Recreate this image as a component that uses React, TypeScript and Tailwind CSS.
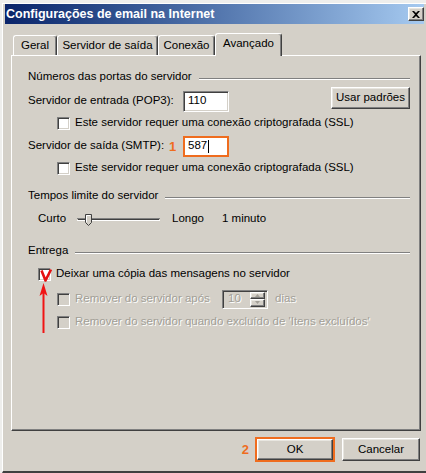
const raised =
  "bg-[#d4d0c8] border border-t-white border-l-white border-r-[#404040] border-b-[#404040] shadow-[inset_-1px_-1px_0_#808080,inset_1px_1px_0_#e8e6e0]";
const sunken =
  "border border-t-[#808080] border-l-[#808080] border-r-white border-b-white shadow-[inset_1px_1px_0_#404040,inset_-1px_-1px_0_#d4d0c8]";
const disabledText = "text-[#a29f97] [text-shadow:1px_1px_0_#ffffff]";

const Checkbox = ({ disabled = false, checked = false }: { disabled?: boolean; checked?: boolean }) => (
  <div
    className={`relative w-[13px] h-[13px] shrink-0 ${sunken} ${
      disabled ? "bg-[#d4d0c8]" : "bg-white"
    }`}
  >
    {checked && (
      <svg className="absolute left-[0px] top-[-1px]" width="14" height="14" viewBox="0 0 14 14">
        <path d="M2.5 2.5 L6.5 12.5 L12 1.5" fill="none" stroke="#e41010" strokeWidth="2.6" strokeLinejoin="round" />
      </svg>
    )}
  </div>
);

const GroupHeader = ({ label, className = "" }: { label: string; className?: string }) => (
  <div className={`h-[22px] flex items-center ${className}`}>
    <span>{label}</span>
    <div className="flex-1 ml-[7px] mt-[4px] border-t border-t-[#808080] border-b border-b-white" />
  </div>
);

const Slider = () => (
  <svg width="83" height="14" viewBox="0 0 83 14">
    <line x1="0" y1="6.5" x2="83" y2="6.5" stroke="#808080" />
    <line x1="1" y1="7.5" x2="82" y2="7.5" stroke="#404040" />
    <line x1="0" y1="8.5" x2="83" y2="8.5" stroke="#ffffff" />
    <path d="M8.5 2.5 H14.5 V10.5 L11.5 13.5 L8.5 10.5 Z" fill="#d4d0c8" stroke="#404040" />
    <path d="M9.5 10 V3.5 H13.5" fill="none" stroke="#ffffff" />
  </svg>
);

const TabButton = ({ label, w, active = false }: { label: string; w: string; active?: boolean }) => (
  <div
    className={`${w} flex items-center justify-center bg-[#d4d0c8] border-t border-l border-t-white border-l-white border-r border-r-[#404040] shadow-[inset_-1px_0_0_#808080] rounded-t-[3px] ${
      active ? "h-[23px] -mb-[1px] pb-[3px] relative z-10" : "h-[20px]"
    }`}
  >
    {label}
  </div>
);

export default function App() {
  return (
    <div className="relative w-[426px] h-[473px] overflow-hidden bg-[#eeeeec] pl-[2px] pt-[3px] font-['Liberation_Sans',Arial,sans-serif] text-[11.5px] text-black leading-none">
      <div className="w-[424px] h-[470px] bg-[#d4d0c8] border-l border-t border-l-white border-t-white border-b-2 border-b-[#404040] px-[2px] flex flex-col">
        {/* Title bar */}
        <div className="h-[20px] flex items-center bg-linear-to-r from-[#0a246a] to-[#a6caf0] pl-[1px]">
          <span className="text-white font-bold text-[12.5px]">Configurações de email na Internet</span>
          <div className={`ml-auto w-[16px] h-[14px] flex items-center justify-center ${raised}`}>
            <svg width="8" height="7" viewBox="0 0 8 7">
              <path d="M0 0 H2 L4 2 L6 0 H8 L5 3.5 L8 7 H6 L4 5 L2 7 H0 L3 3.5 Z" fill="#000" />
            </svg>
          </div>
        </div>

        {/* Tabs */}
        <div className="mt-[9px] h-[22px] flex items-end pl-[8px]">
          <TabButton label="Geral" w="w-[44px]" />
          <TabButton label="Servidor de saída" w="w-[101px]" />
          <TabButton label="Conexão" w="w-[57px]" />
          <TabButton label="Avançado" w="w-[67px]" active />
        </div>

        {/* Panel */}
        <div className="ml-[6px] w-[410px] h-[376px] border border-t-white border-l-white border-r-[#404040] border-b-[#404040] shadow-[inset_-1px_-1px_0_#808080] pt-[10px] pl-[16px] pr-[10px] flex flex-col">
          <GroupHeader label="Números das portas do servidor" />

          <div className="h-[22px] flex items-center mt-[2px]">
            <span className="w-[155px]">Servidor de entrada (POP3):</span>
            <div className={`w-[46px] h-[21px] bg-white ${sunken} flex items-center pl-[4px]`}>110</div>
            <div className={`ml-auto mb-[6px] w-[79px] h-[22px] flex items-center justify-center ${raised}`}>
              Usar padrões
            </div>
          </div>

          <div className="h-[22px] flex items-center">
            <div className="ml-[29px]">
              <Checkbox />
            </div>
            <span className="ml-[5px]">Este servidor requer uma conexão criptografada (SSL)</span>
          </div>

          <div className="h-[22px] flex items-center mt-[1px]">
            <span className="w-[141px]">Servidor de saída (SMTP):</span>
            <span className="w-[14px] text-[13px] font-bold text-[#ef6c1e]">1</span>
            <div className="w-[46px] h-[21px] bg-white border-2 border-[#ef6c1e] flex items-center pl-[3px]">
              587<span className="ml-[1px] w-px h-[13px] bg-black" />
            </div>
          </div>

          <div className="h-[22px] flex items-center">
            <div className="ml-[29px]">
              <Checkbox />
            </div>
            <span className="ml-[5px]">Este servidor requer uma conexão criptografada (SSL)</span>
          </div>

          <GroupHeader label="Tempos limite do servidor" className="mt-[6px]" />

          <div className="h-[22px] flex items-center mt-[1px] pl-[10px]">
            <span className="w-[39px]">Curto</span>
            <Slider />
            <span className="ml-[12px] w-[50px]">Longo</span>
            <span>1 minuto</span>
          </div>

          <GroupHeader label="Entrega" className="mt-[10px]" />

          <div className="h-[22px] flex items-center mt-[1px]">
            <div className="ml-[10px]">
              <Checkbox checked />
            </div>
            <span className="ml-[5px]">Deixar uma cópia das mensagens no servidor</span>
          </div>

          <div className="h-[22px] flex items-center mt-[3px]">
            <div className="ml-[29px]">
              <Checkbox disabled />
            </div>
            <span className={`ml-[5px] w-[147px] ${disabledText}`}>Remover do servidor após</span>
            <div className={`w-[46px] h-[19px] ${sunken} flex items-center pl-[5px] pr-[2px]`}>
              <span className={disabledText}>10</span>
              <div className="ml-auto w-[15px] h-[15px] flex flex-col">
                <div className={`flex-1 flex items-center justify-center ${raised}`}>
                  <svg width="5" height="3" viewBox="0 0 5 3">
                    <path d="M2.5 0 L5 3 H0 Z" fill="#a29f97" />
                  </svg>
                </div>
                <div className={`flex-1 flex items-center justify-center ${raised}`}>
                  <svg width="5" height="3" viewBox="0 0 5 3">
                    <path d="M0 0 H5 L2.5 3 Z" fill="#a29f97" />
                  </svg>
                </div>
              </div>
            </div>
            <span className={`ml-[7px] ${disabledText}`}>dias</span>
          </div>

          <div className="h-[22px] flex items-center mt-[1px]">
            <div className="ml-[29px]">
              <Checkbox disabled />
            </div>
            <span className={`ml-[5px] ${disabledText}`}>
              Remover do servidor quando excluído de 'Itens excluídos'
            </span>
          </div>
        </div>

        {/* Buttons */}
        <div className="mt-[6px] h-[25px] flex items-center justify-end pr-[4px]">
          <span className="mr-[6px] text-[13px] font-bold text-[#ef6c1e]">2</span>
          <div className="w-[80px] h-[25px] border-2 border-[#ef6c1e]">
            <div className={`w-full h-full flex items-center justify-center ${raised}`}>OK</div>
          </div>
          <div className={`ml-[7px] w-[78px] h-[23px] flex items-center justify-center ${raised}`}>Cancelar</div>
        </div>
      </div>

      {/* red annotation arrow */}
      <svg className="absolute left-[38px] top-[283px]" width="11" height="50" viewBox="0 0 11 50">
        <line x1="5.5" y1="10" x2="5.5" y2="50" stroke="#f01414" strokeWidth="2" />
        <path d="M5.5 0 L9.5 13 L5.5 10 L1.5 13 Z" fill="#f01414" />
      </svg>
    </div>
  );
}
